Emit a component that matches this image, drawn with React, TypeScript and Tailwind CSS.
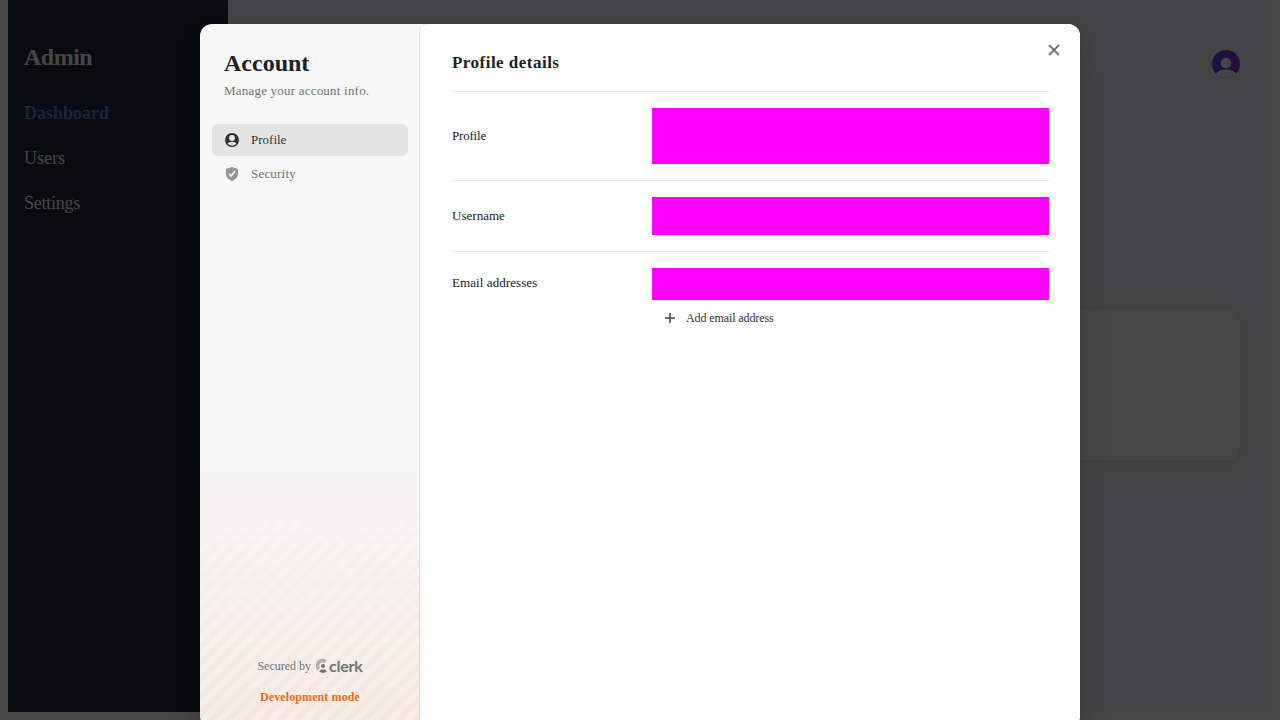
import React from "react";

function Row({ label, layout, children }: { label: string; layout: string; children: React.ReactNode }) {
  return (
    <section className={`flex border-t border-[#ebebeb] py-4 ${layout}`}>
      <div className="w-[200px] shrink-0 text-[13px] leading-[18px] tracking-[0.02px] text-[#212126]">{label}</div>
      {children}
    </section>
  );
}

function ProfileIcon() {
  return (
    <svg viewBox="0 0 16 16" className="size-4 shrink-0" fill="currentColor">
      <path fillRule="evenodd" clipRule="evenodd" d="M15 8A7 7 0 1 1 1 8a7 7 0 0 1 14 0Zm-4.100-2a2.900 2.900 0 1 1-5.800 0 2.900 2.900 0 0 1 5.800 0ZM8 13.600c1.800 0 3.400-.8 4.400-2.100C11.600 10.400 10.100 9.700 8 9.700s-3.600.7-4.400 1.800A5.600 5.600 0 0 0 8 13.600Z" />
    </svg>
  );
}

function ShieldIcon() {
  return (
    <svg viewBox="0 0 16 16" className="size-4 shrink-0" fill="currentColor">
      <path fillRule="evenodd" clipRule="evenodd" d="M8.400 1.100a.8.8 0 0 0-.8 0C6 2 4.200 2.600 2.500 2.800a.6.6 0 0 0-.5.6V7c0 3.900 2.300 6.500 5.700 7.900a.8.8 0 0 0 .6 0C11.700 13.500 14 10.900 14 7V3.400a.6.6 0 0 0-.5-.6C11.800 2.600 10 2 8.400 1.100Zm2.900 5a.85.85 0 0 0-1.400-1L7.200 8.800 6.100 7.600a.85.85 0 0 0-1.200 1.200l1.800 1.900a.85.85 0 0 0 1.300-.1l3.300-4.500Z" />
    </svg>
  );
}

function ClerkMark() {
  return (
    <span className="flex items-center gap-px text-[#747277]">
      <svg viewBox="0 0 12 14" className="h-[14px] w-[12px]">
        <path d="M10.900 1.600A6.600 6.600 0 0 0 1.800 11.400L4.100 9.100A3.400 3.400 0 0 1 8.500 4Z" fill="currentColor" opacity=".5" />
        <circle cx="7" cy="7.100" r="2" fill="currentColor" />
        <path d="M10.900 12.500 8.700 10.300a4 4 0 0 1-3.400 0L3.100 12.500a6.600 6.600 0 0 0 7.800 0Z" fill="currentColor" />
      </svg>
      <span className="font-['Lato'] text-[16px] leading-[14px] font-bold tracking-[-0.25px]">clerk</span>
    </span>
  );
}

function NavItem({ icon, label, active }: { icon: React.ReactNode; label: string; active?: boolean }) {
  return (
    <button
      className={`flex h-8 w-full items-center gap-[11px] rounded-md px-3 text-left text-[13px] leading-[18px] ${
        active ? "bg-[#e4e4e4] text-[#2f3037]" : "text-[#747474]"
      }`}
    >
      <span className={active ? "" : "text-[#969696]"}>{icon}</span>
      <span className={active ? "" : "tracking-[0.2px]"}>{label}</span>
    </button>
  );
}

function AdminPage() {
  return (
    <div className="flex h-[712px] px-2">
      <aside className="flex w-[220px] shrink-0 flex-col bg-[#1f2937] px-4 pt-[43px] text-white">
        <h2 className="text-[24px] leading-[28px] font-bold tracking-[-0.5px]">Admin</h2>
        <nav className="mt-[32px] flex flex-col gap-[25px] text-[18px] leading-[20px]">
          <a className="font-bold text-[#4a90e2]">Dashboard</a>
          <a>Users</a>
          <a className="tracking-[-0.25px]">Settings</a>
        </nav>
      </aside>
      <main className="flex flex-1 flex-col items-end bg-[#f5f7fa] px-8 pt-[50px]">
        <svg viewBox="0 0 28 28" className="size-7">
          <defs>
            <linearGradient id="avatar">
              <stop stopColor="#4a48f5" />
              <stop offset="1" stopColor="#a02be8" />
            </linearGradient>
            <clipPath id="round"><circle cx="14" cy="14" r="14" /></clipPath>
          </defs>
          <g clipPath="url(#round)">
            <rect width="28" height="28" fill="url(#avatar)" />
            <circle cx="14" cy="13" r="5.300" fill="#fff" />
            <ellipse cx="14" cy="27.500" rx="11.500" ry="8" fill="#fff" />
          </g>
        </svg>
        <div className="mt-[232px] h-[150px] w-[400px] rounded-xl bg-white shadow-[0_4px_20px_rgba(0,0,0,0.08)]" />
      </main>
    </div>
  );
}

export default function App() {
  return (
    <div className="relative h-[720px] overflow-hidden bg-white font-['Liberation_Serif',serif]">
      <AdminPage />
      <div className="absolute inset-0 flex justify-center overflow-hidden bg-black/73 pt-6">
        <div className="flex h-[704px] w-[880px] overflow-hidden rounded-xl bg-[#f7f7f7] shadow-[0_5px_15px_rgba(0,0,0,0.08),0_15px_35px_-5px_rgba(25,28,33,0.2),0_0_0_1px_rgba(0,0,0,0.03)]">
          <aside className="relative flex w-[220px] shrink-0 flex-col px-3">
            <div className="absolute inset-x-0 bottom-0 h-[300px] bg-[repeating-linear-gradient(-45deg,rgba(243,107,22,0.07),rgba(243,107,22,0.07)_6px,rgba(243,107,22,0.11)_6px,rgba(243,107,22,0.11)_12px)] [mask-image:linear-gradient(transparent_6%,black)]" />
            <div className="px-3 pt-[27px]">
              <h1 className="text-[24px] leading-6 font-bold text-[#212126]">Account</h1>
              <p className="mt-[7px] text-[13px] leading-[18px] tracking-[0.21px] text-[#747474]">Manage your account info.</p>
            </div>
            <nav className="mt-6 flex flex-1 flex-col gap-[2px]">
              <NavItem icon={<ProfileIcon />} label="Profile" active />
              <NavItem icon={<ShieldIcon />} label="Security" />
            </nav>
            <footer className="relative flex h-[70px] flex-col items-center gap-[15px]">
              <div className="flex h-4 items-center gap-[5px] text-[12px] text-[#747277]">
                <span>Secured by</span>
                <ClerkMark />
              </div>
              <p className="text-[12px] leading-4 font-bold tracking-[0.1px] text-[#f36b16]">Development mode</p>
            </footer>
          </aside>
          <main className="relative flex-1 rounded-lg bg-white px-8 pt-[30px] shadow-[0_0_0_1px_rgba(0,0,0,0.06),0_1px_2px_rgba(0,0,0,0.06)]">
            <button className="absolute top-4 right-[17px] flex size-5 items-center justify-center text-[#747474]">
              <svg viewBox="0 0 16 16" className="size-4" fill="none" stroke="currentColor" strokeWidth="1.900">
                <path d="m3 3 10 10M13 3 3 13" />
              </svg>
            </button>
            <div className="w-[597px]">
              <h2 className="mb-[19px] text-[17px] leading-[18px] font-bold tracking-[0.48px] text-[#212126]">Profile details</h2>
              <Row label="Profile" layout="h-[89px] [&>div:first-child]:pt-[19px] [&>div:first-child]:tracking-[-0.2px]">
                <div className="h-14 flex-1 bg-[#ff00ff]" />
              </Row>
              <Row label="Username" layout="h-[71px] [&>div:first-child]:pt-[10px]">
                <div className="h-[38px] flex-1 bg-[#ff00ff]" />
              </Row>
              <Row label="Email addresses" layout="h-[100px] [&>div:first-child]:pt-[6px] [&>div:first-child]:tracking-[0.08px]">
                <div className="flex-1">
                  <div className="h-8 bg-[#ff00ff]" />
                  <button className="mt-[2px] flex h-8 items-center gap-[10px] pl-3 text-[12px] tracking-[-0.1px] text-[#2f3037]">
                    <svg viewBox="0 0 12 12" className="size-3" fill="none" stroke="#42434d" strokeWidth="1.500">
                      <path d="M6 1v10M1 6h10" />
                    </svg>
                    Add email address
                  </button>
                </div>
              </Row>
            </div>
          </main>
        </div>
      </div>
    </div>
  );
}
